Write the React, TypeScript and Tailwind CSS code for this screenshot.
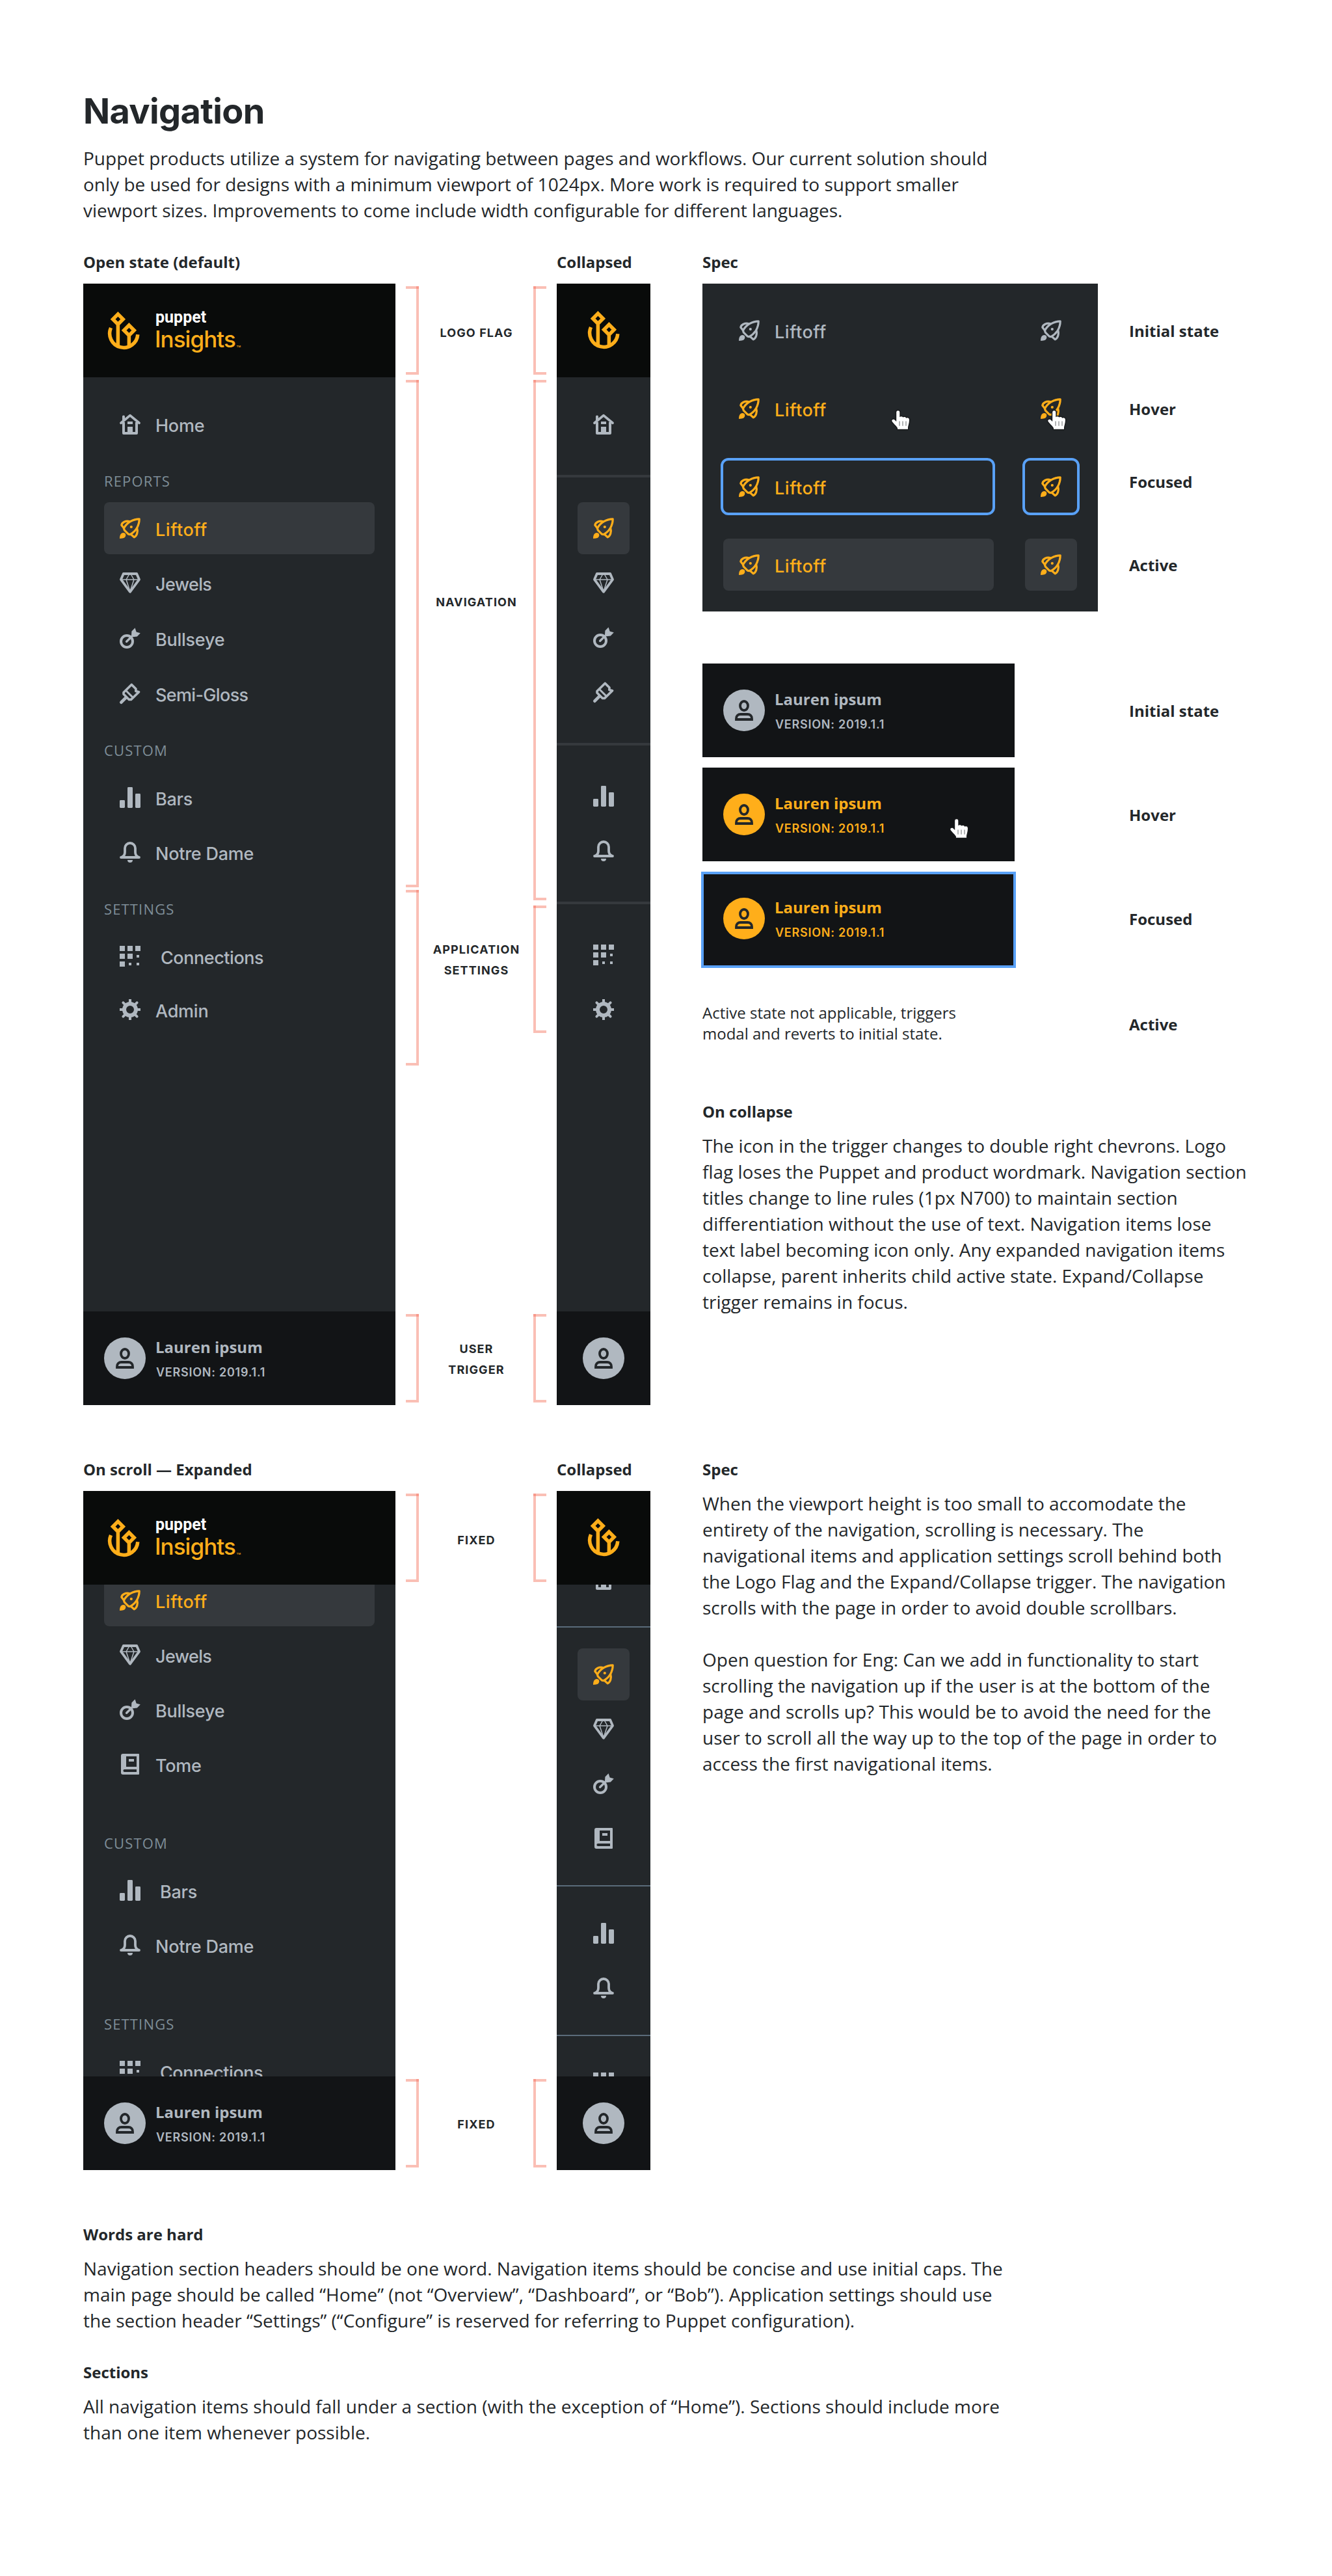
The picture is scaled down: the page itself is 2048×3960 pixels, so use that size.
import type { ReactNode } from "react";

/* ---------- icons, all on a 16-unit grid ---------- */

type IconName = "home" | "rocket" | "diamond" | "bullseye" | "brush" | "bars" | "bell" | "grid" | "gear" | "tome";

const glyphs: Record<IconName, ReactNode> = {
  home: (
    <>
      <path d="M1 7.1 8 1.3l7 5.8" fill="none" stroke="currentColor" strokeWidth="1.9" strokeLinecap="round" strokeLinejoin="round" />
      <path d="M3 6.5V15h10V6.5" fill="none" stroke="currentColor" strokeWidth="2" strokeLinejoin="round" />
      <path d="M6 10h4v5H6zM6 6h4v2H6z" />
      <rect x="2" y="1.2" width="2" height="5" rx="0.9" />
    </>
  ),
  rocket: (
    <>
      <g fill="none" stroke="currentColor" strokeWidth="1.6" strokeLinejoin="round">
        <path d="M15.1.9C10.5.9 5.4 3.6 3.2 8.1l.5 1.5 3 3 1.3.2c4.6-2.4 7.1-7.1 7.1-11.900Z" />
        <path d="M7.8 2.9C4.6 1.9 1.7 3.6 1.4 5.6L3.3 8" />
        <path d="M13.300 7.600C14.300 10.800 13.200 13.900 11.100 14.900L8.600 12.700" />
      </g>
      <circle cx="8.900" cy="7" r="1.050" />
      <path d="M0 16C0 13.300.900 11.500 2.800 11.500c1.500 0 2.300 1.400 1.600 2.900C3.600 15.800 2 15.900 0 16Z" />
    </>
  ),
  diamond: (
    <g fill="none" stroke="currentColor" strokeLinejoin="round">
      <path d="M2.900 1h10.200L15 5.400 8 14.900 1 5.400Z" strokeWidth="1.900" />
      <path d="M1.500 5.500h13M7.300 1.500 5 5.500l3 9 3-9-2.300-4" strokeWidth=".75" />
    </g>
  ),
  bullseye: (
    <>
      <circle cx="5.500" cy="10.500" r="4.500" fill="none" stroke="currentColor" strokeWidth="2" />
      <path d="M5.300 10.600 10.300 5.700" fill="none" stroke="currentColor" strokeWidth="1.700" strokeLinecap="round" />
      <path d="M9.200 2.700 11.800.1l1 3.100 3.100.900-2.500 2.700-3.200.300L9 6Z" />
    </>
  ),
  brush: (
    <g fill="none" stroke="currentColor" strokeLinejoin="round">
      <path d="M1.200 14.800 4.700 11.300" strokeWidth="2.400" strokeLinecap="round" />
      <path d="M9.100 1.200 3 7.300v1.200l4.200 4.200h1.600l6-5.800-2.400-.6.1-1.800Z" strokeWidth="1.800" />
      <path d="M4.900 5.900 10.200 11.200" strokeWidth="1.500" />
    </g>
  ),
  bars: (
    <>
      <rect x="0" y="10" width="4" height="6" rx=".7" />
      <rect x="6" y="0" width="4" height="16" rx=".7" />
      <rect x="12" y="5" width="4" height="11" rx=".7" />
    </>
  ),
  bell: (
    <>
      <path d="M1 12h14M1.400 11.900C3.600 11 4 9.800 4 8V5a4 4 0 0 1 8 0v3c0 1.800.4 3 2.600 3.900" fill="none" stroke="currentColor" strokeWidth="1.900" strokeLinecap="round" />
      <path d="M6 14h4a2 2 0 0 1-4 0Z" />
    </>
  ),
  grid: <path d="M0 0h4v4H0zM6 0h4v4H6zM12 0h4v4h-4zM0 6h4v4H0zM6 6h4v4H6zM13 7h2v2h-2zM0 12h4v4H0zM7 13h2v2H7zM13 13h2v2h-2z" />,
  gear: (
    <g fill="none" stroke="currentColor">
      <circle cx="8" cy="8" r="4.500" strokeWidth="3" />
      <path d="M8 0v3M8 13v3M0 8h3M13 8h3" strokeWidth="2" />
      <path d="M2.700 2.700 4.600 4.600M11.400 11.400l1.900 1.900M2.700 13.300l1.900-1.900M11.400 4.600l1.900-1.900" strokeWidth="2" strokeLinecap="round" />
    </g>
  ),
  tome: (
    <path
      fillRule="evenodd"
      d="M2.500 0H14.500A.5.5 0 0 1 15 .5V15.500A.5.5 0 0 1 14.500 16H2.500A1.500 1.500 0 0 1 1 14.500v-13A1.500 1.500 0 0 1 2.500 0ZM5 2v8h8V2ZM7 4h4v2H7ZM3.700 12a1 1 0 0 0 0 2H13v-2Z"
    />
  ),
};

function Icon({ name }: { name: IconName }) {
  return (
    <svg viewBox="0 0 16 16" className="size-8 shrink-0 overflow-visible fill-current">
      {glyphs[name]}
    </svg>
  );
}

function LogoMark() {
  return (
    <svg viewBox="0 0 50 60" className="h-[60px] w-[50px] shrink-0 text-[#ffae1a]" fill="none" stroke="currentColor" strokeWidth="5.500">
      <path d="M16.400 4.900 24.200 12.700 16.400 20.500 8.600 12.700Z" />
      <path d="M33.400 22 41.200 29.800 33.400 37.600 25.600 29.800Z" />
      <path d="M16.400 21.500V54.500M33.400 38.500V54.500" />
      <path d="M5.500 26A21.600 21.600 0 1 0 46.800 36.300" />
    </svg>
  );
}

function Avatar({ tone = "text-[#b0b8c0]" }: { tone?: string }) {
  return (
    <div className={`flex size-16 shrink-0 items-center justify-center rounded-full bg-current ${tone}`}>
      <svg viewBox="0 0 28 32" className="h-8 w-7 text-[#23272a]" fill="none" stroke="currentColor" strokeWidth="3.800">
        <ellipse cx="14" cy="9" rx="6" ry="7" />
        <path d="M2 30v-1.500C2 24.500 5 22 8.500 22h11c3.500 0 6.500 2.500 6.500 6.500V30Z" />
      </svg>
    </div>
  );
}

function HandCursor({ className }: { className: string }) {
  return (
    <svg viewBox="-2 -2 32 34" className={`absolute h-[34px] w-8 ${className}`}>
      <path
        d="M7.200 2.500Q7.200.3 9.800.3 12.300.3 12.300 2.500V10.300Q13 9.300 15 9.300 17 9.400 17.300 10.600 18.500 9.700 20.300 10.100 22 10.500 22.200 11.800 23.500 11 25.300 11.600 27 12.200 27 14.500C27 20 25 24 25 26V28.700H9V27C8 24.500 2 19.500.4 16.500-.3 14.500 2 13 4 14L7.200 17Z"
        fill="#fff"
        stroke="#17191b"
        strokeWidth="3"
        paintOrder="stroke"
        strokeLinejoin="round"
      />
      <path d="M12 16.500v7.200M17 16.500v7.200M22 16.500v7.200" stroke="#666a6d" strokeWidth="1" />
    </svg>
  );
}

/* ---------- navigation pieces ---------- */

function LogoHeader() {
  return (
    <div className="flex h-36 shrink-0 bg-[#090b0a] pl-[37px]">
      <div className="pt-[42px]">
        <LogoMark />
      </div>
      <div className="pt-[38px] pl-[23px]">
        <div className="pl-px font-[Roboto] text-[25px] leading-[28px] font-bold text-white">puppet</div>
        <div className="-mt-[2px] flex items-end font-[Inter] text-[35px] leading-[42px] font-medium tracking-[-0.950px] text-[#ffae1a]">
          Insights
          <span className="mb-[7px] ml-[2px] text-[4px] leading-[5px] tracking-normal">TM</span>
        </div>
      </div>
    </div>
  );
}

function LogoHeaderCollapsed() {
  return (
    <div className="flex h-36 shrink-0 bg-[#090b0a] pt-[41px] pl-[47px]">
      <LogoMark />
    </div>
  );
}

type NavItemProps = { icon: IconName; label: string; active?: boolean; gap?: string; indent?: string; tracking?: string };

function NavItem({ icon, label, active, gap = "mt-1", indent = "ml-[23px]", tracking = "tracking-[-0.250px]" }: NavItemProps) {
  return (
    <div className={`flex h-20 shrink-0 rounded-lg pl-6 ${gap} ${active ? "bg-[#35393d] text-[#ffae1a]" : "text-[#b0b8c0]"}`}>
      <div className="flex items-center">
        <Icon name={icon} />
      </div>
      <span className={`pt-[3px] font-[Inter] text-[27px] leading-[80px] font-medium ${tracking} ${indent}`}>{label}</span>
    </div>
  );
}

function NavTitle({ children, gap = "mt-8" }: { children: string; gap?: string }) {
  return <div className={`shrink-0 text-[22px] leading-[30px] font-medium tracking-[1.150px] text-[#7f8e98] ${gap}`}>{children}</div>;
}

function UserTrigger({ tone = "text-[#b0b8c0]" }: { tone?: string }) {
  return (
    <div className={`flex h-36 shrink-0 bg-[#121416] pl-8 ${tone}`}>
      <div className="flex items-center">
        <Avatar tone={tone} />
      </div>
      <div className="pt-[39px] pl-4">
        <div className="-ml-px text-[24px] leading-8 font-bold">Lauren ipsum</div>
        <div className="mt-[7px] font-[Inter] text-[18px] leading-8 font-semibold tracking-[0.750px]">VERSION: 2019.1.1</div>
      </div>
    </div>
  );
}

function UserTriggerCollapsed() {
  return (
    <div className="flex h-36 shrink-0 items-center justify-center bg-[#121416]">
      <Avatar />
    </div>
  );
}

function RailItem({ icon, active, gap = "mt-1" }: { icon: IconName; active?: boolean; gap?: string }) {
  return (
    <div className={`flex size-20 shrink-0 items-center justify-center rounded-lg ${gap} ${active ? "bg-[#35393d] text-[#ffae1a]" : "text-[#b0b8c0]"}`}>
      <Icon name={icon} />
    </div>
  );
}

function Rule({ className }: { className: string }) {
  return <div className={`w-full shrink-0 ${className}`} />;
}

/* ---------- annotations ---------- */

function Bracket({ side, className }: { side: "left" | "right"; className: string }) {
  const left = side === "left";
  return (
    <div className={`relative w-5 border-y-4 border-[#fabfb5] ${left ? "border-r-4" : "border-l-4"} ${className}`}>
      <span className={`absolute -top-1 size-1 bg-[#f8998b] ${left ? "-right-1" : "-left-1"}`} />
    </div>
  );
}

function Caption({ children, className }: { children: ReactNode; className: string }) {
  return <div className={`pl-px text-center font-[Inter] text-[18px] leading-8 font-bold tracking-[1.100px] ${className}`}>{children}</div>;
}

function Heading({ children, className = "" }: { children: ReactNode; className?: string }) {
  return <h2 className={`text-[24px] leading-8 font-bold whitespace-nowrap ${className}`}>{children}</h2>;
}

function Lines({ lines, className = "" }: { lines: string[]; className?: string }) {
  return (
    <p className={`text-[28px] leading-10 whitespace-nowrap ${className}`}>
      {lines.map((line) => (
        <span key={line} className="block">
          {line}
        </span>
      ))}
    </p>
  );
}

function SpecRow({ tone, box = "", wide = "w-[416px]", cursors }: { tone: string; box?: string; wide?: string; cursors?: boolean }) {
  return (
    <div className={`flex h-20 justify-between ${tone}`}>
      <div className={`relative flex rounded-lg pl-6 ${wide} ${box}`}>
        <div className="flex items-center">
          <Icon name="rocket" />
        </div>
        <span className="ml-[23px] pt-[3px] font-[Inter] text-[27px] leading-[80px] font-medium tracking-[0.550px]">Liftoff</span>
        {cursors && <HandCursor className="top-[41px] left-[257px]" />}
      </div>
      <div className={`relative flex w-20 items-center justify-center rounded-lg ${box}`}>
        <Icon name="rocket" />
        {cursors && <HandCursor className="top-[41px] left-[33px]" />}
      </div>
    </div>
  );
}

/* ---------- page ---------- */

export default function App() {
  return (
    <div className="min-h-[3960px] w-[2048px] bg-white px-32 pt-[139px] font-['Open_Sans',sans-serif] text-[#23272a]">
      <h1 className="font-[Inter] text-[54px] leading-[64px] font-bold tracking-[-0.650px]">Navigation</h1>
      <Lines
        className="mt-5"
        lines={[
          "Puppet products utilize a system for navigating between pages and workflows. Our current solution should",
          "only be used for designs with a minimum viewport of 1024px. More work is required to support smaller",
          "viewport sizes. Improvements to come include width configurable for different languages.",
        ]}
      />

      <section className="mt-11 flex h-[1773px]">
        <div className="flex w-[480px] flex-col">
          <Heading>Open state (default)</Heading>
          <div className="mt-[17px] flex h-[1724px] flex-col bg-[#23272a]">
            <LogoHeader />
            <div className="flex flex-1 flex-col px-8">
              <NavItem icon="home" label="Home" gap="mt-8" />
              <NavTitle>REPORTS</NavTitle>
              <NavItem icon="rocket" label="Liftoff" active gap="mt-[18px]" tracking="tracking-[0.550px]" />
              <NavItem icon="diamond" label="Jewels" tracking="tracking-[-0.650px]" />
              <NavItem icon="bullseye" label="Bullseye" gap="mt-[5px]" />
              <NavItem icon="brush" label="Semi-Gloss" gap="mt-[5px]" tracking="tracking-[-0.650px]" />
              <NavTitle>CUSTOM</NavTitle>
              <NavItem icon="bars" label="Bars" gap="mt-[18px]" />
              <NavItem icon="bell" label="Notre Dame" />
              <NavTitle>SETTINGS</NavTitle>
              <NavItem icon="grid" label="Connections" gap="mt-[18px]" indent="ml-[31px]" tracking="tracking-[-0.450px]" />
              <NavItem icon="gear" label="Admin" gap="mt-[2px]" />
            </div>
            <UserTrigger />
          </div>
        </div>

        <div className="mt-[49px] ml-4 flex w-[216px] justify-between">
          <div className="flex flex-col">
            <Bracket side="left" className="mt-1 h-[136px]" />
            <Bracket side="left" className="mt-2 h-[780px]" />
            <Bracket side="left" className="mt-1 h-[270px]" />
            <Bracket side="left" className="mt-[382px] h-[136px]" />
          </div>
          <div className="flex flex-col">
            <Caption className="mt-[60px]">LOGO FLAG</Caption>
            <Caption className="mt-[382px]">NAVIGATION</Caption>
            <Caption className="mt-[502px]">
              APPLICATION
              <br />
              SETTINGS
            </Caption>
            <Caption className="mt-[550px]">
              USER
              <br />
              TRIGGER
            </Caption>
          </div>
          <div className="flex flex-col">
            <Bracket side="right" className="mt-1 h-[136px]" />
            <Bracket side="right" className="mt-2 h-[800px]" />
            <Bracket side="right" className="mt-2 h-[196px]" />
            <Bracket side="right" className="mt-[432px] h-[136px]" />
          </div>
        </div>

        <div className="ml-4 w-36">
          <Heading>Collapsed</Heading>
          <div className="mt-[17px] flex h-[1724px] flex-col bg-[#23272a]">
            <LogoHeaderCollapsed />
            <div className="flex flex-1 flex-col items-center">
              <RailItem icon="home" gap="mt-8" />
              <Rule className="mt-[38px] h-1 bg-[#35393d]" />
              <RailItem icon="rocket" active gap="mt-[38px]" />
              <RailItem icon="diamond" />
              <RailItem icon="bullseye" />
              <RailItem icon="brush" />
              <Rule className="mt-[38px] h-1 bg-[#35393d]" />
              <RailItem icon="bars" gap="mt-[38px]" />
              <RailItem icon="bell" />
              <Rule className="mt-[38px] h-1 bg-[#35393d]" />
              <RailItem icon="grid" gap="mt-[38px]" />
              <RailItem icon="gear" />
            </div>
            <UserTriggerCollapsed />
          </div>
        </div>

        <div className="ml-20">
          <Heading>Spec</Heading>
          <div className="mt-[17px] flex">
            <div className="flex h-[504px] w-[608px] flex-col gap-10 bg-[#23272a] px-8 pt-8">
              <SpecRow tone="text-[#b0b8c0]" />
              <SpecRow tone="text-[#ffae1a]" cursors />
              <SpecRow tone="text-[#ffae1a]" wide="w-[414px]" box="outline-4 outline-[#59a1f7]" />
              <SpecRow tone="text-[#ffae1a]" box="bg-[#35393d]" />
            </div>
            <div className="ml-12">
              <Heading className="mt-[57px]">Initial state</Heading>
              <Heading className="mt-[88px]">Hover</Heading>
              <Heading className="mt-20">Focused</Heading>
              <Heading className="mt-24">Active</Heading>
            </div>
          </div>

          <div className="mt-20 flex">
            <div className="w-[608px]">
              <div className="flex w-[480px] flex-col gap-4">
                <UserTrigger />
                <div className="relative">
                  <UserTrigger tone="text-[#ffae1a]" />
                  <HandCursor className="top-[77px] left-[379px]" />
                </div>
                <div className="relative">
                  <UserTrigger tone="text-[#ffae1a]" />
                  <div className="absolute -inset-x-[2px] top-0 -bottom-1 border-4 border-[#59a1f7]" />
                </div>
              </div>
              <p className="mt-[57px] text-[24px] leading-8 whitespace-nowrap">
                Active state not applicable, triggers
                <br />
                modal and reverts to initial state.
              </p>
            </div>
            <div className="ml-12">
              <Heading className="mt-[57px]">Initial state</Heading>
              <Heading className="mt-32">Hover</Heading>
              <Heading className="mt-32">Focused</Heading>
              <Heading className="mt-[130px]">Active</Heading>
            </div>
          </div>

          <Heading className="mt-[88px]">On collapse</Heading>
          <Lines
            className="mt-4"
            lines={[
              "The icon in the trigger changes to double right chevrons. Logo",
              "flag loses the Puppet and product wordmark. Navigation section",
              "titles change to line rules (1px N700) to maintain section",
              "differentiation without the use of text. Navigation items lose",
              "text label becoming icon only. Any expanded navigation items",
              "collapse, parent inherits child active state. Expand/Collapse",
              "trigger remains in focus.",
            ]}
          />
        </div>
      </section>

      <section className="mt-[83px] flex h-[1093px]">
        <div className="w-[480px]">
          <Heading>On scroll — Expanded</Heading>
          <div className="mt-[17px] flex h-[1044px] flex-col bg-[#23272a]">
            <LogoHeader />
            <div className="flex min-h-0 flex-1 flex-col overflow-hidden px-8">
              <NavItem icon="rocket" label="Liftoff" active gap="-mt-4" tracking="tracking-[0.550px]" />
              <NavItem icon="diamond" label="Jewels" tracking="tracking-[-0.650px]" />
              <NavItem icon="bullseye" label="Bullseye" />
              <NavItem icon="tome" label="Tome" />
              <NavTitle gap="mt-[66px]">CUSTOM</NavTitle>
              <NavItem icon="bars" label="Bars" gap="mt-[18px]" indent="ml-[30px]" />
              <NavItem icon="bell" label="Notre Dame" />
              <NavTitle gap="mt-[66px]">SETTINGS</NavTitle>
              <NavItem icon="grid" label="Connections" gap="mt-[18px]" indent="ml-[30px]" tracking="tracking-[-0.450px]" />
            </div>
            <UserTrigger />
          </div>
        </div>

        <div className="mt-[49px] ml-4 flex w-[216px] justify-between">
          <div className="flex flex-col">
            <Bracket side="left" className="mt-1 h-[136px]" />
            <Bracket side="left" className="mt-[764px] h-[136px]" />
          </div>
          <div className="flex flex-col">
            <Caption className="mt-[60px]">FIXED</Caption>
            <Caption className="mt-[866px]">FIXED</Caption>
          </div>
          <div className="flex flex-col">
            <Bracket side="right" className="mt-1 h-[136px]" />
            <Bracket side="right" className="mt-[764px] h-[136px]" />
          </div>
        </div>

        <div className="ml-4 w-36">
          <Heading>Collapsed</Heading>
          <div className="mt-[17px] flex h-[1044px] flex-col bg-[#23272a]">
            <LogoHeaderCollapsed />
            <div className="flex min-h-0 flex-1 flex-col items-center overflow-hidden">
              <RailItem icon="home" gap="-mt-12" />
              <Rule className="mt-8 h-0.5 bg-[#5a6b7a]" />
              <RailItem icon="rocket" active gap="mt-8" />
              <RailItem icon="diamond" />
              <RailItem icon="bullseye" />
              <RailItem icon="tome" />
              <Rule className="mt-8 h-0.5 bg-[#5a6b7a]" />
              <RailItem icon="bars" gap="mt-8" />
              <RailItem icon="bell" />
              <Rule className="mt-8 h-0.5 bg-[#5a6b7a]" />
              <RailItem icon="grid" gap="mt-8" />
            </div>
            <UserTriggerCollapsed />
          </div>
        </div>

        <div className="ml-20">
          <Heading>Spec</Heading>
          <Lines
            className="mt-4"
            lines={[
              "When the viewport height is too small to accomodate the",
              "entirety of the navigation, scrolling is necessary. The",
              "navigational items and application settings scroll behind both",
              "the Logo Flag and the Expand/Collapse trigger. The navigation",
              "scrolls with the page in order to avoid double scrollbars.",
            ]}
          />
          <Lines
            className="mt-10"
            lines={[
              "Open question for Eng: Can we add in functionality to start",
              "scrolling the navigation up if the user is at the bottom of the",
              "page and scrolls up? This would be to avoid the need for the",
              "user to scroll all the way up to the top of the page in order to",
              "access the first navigational items.",
            ]}
          />
        </div>
      </section>

      <Heading className="mt-[83px]">Words are hard</Heading>
      <Lines
        className="mt-4"
        lines={[
          "Navigation section headers should be one word. Navigation items should be concise and use initial caps. The",
          "main page should be called “Home” (not “Overview”, “Dashboard”, or “Bob”). Application settings should use",
          "the section header “Settings” (“Configure” is reserved for referring to Puppet configuration).",
        ]}
      />
      <Heading className="mt-11">Sections</Heading>
      <Lines
        className="mt-4"
        lines={[
          "All navigation items should fall under a section (with the exception of “Home”). Sections should include more",
          "than one item whenever possible.",
        ]}
      />
    </div>
  );
}
